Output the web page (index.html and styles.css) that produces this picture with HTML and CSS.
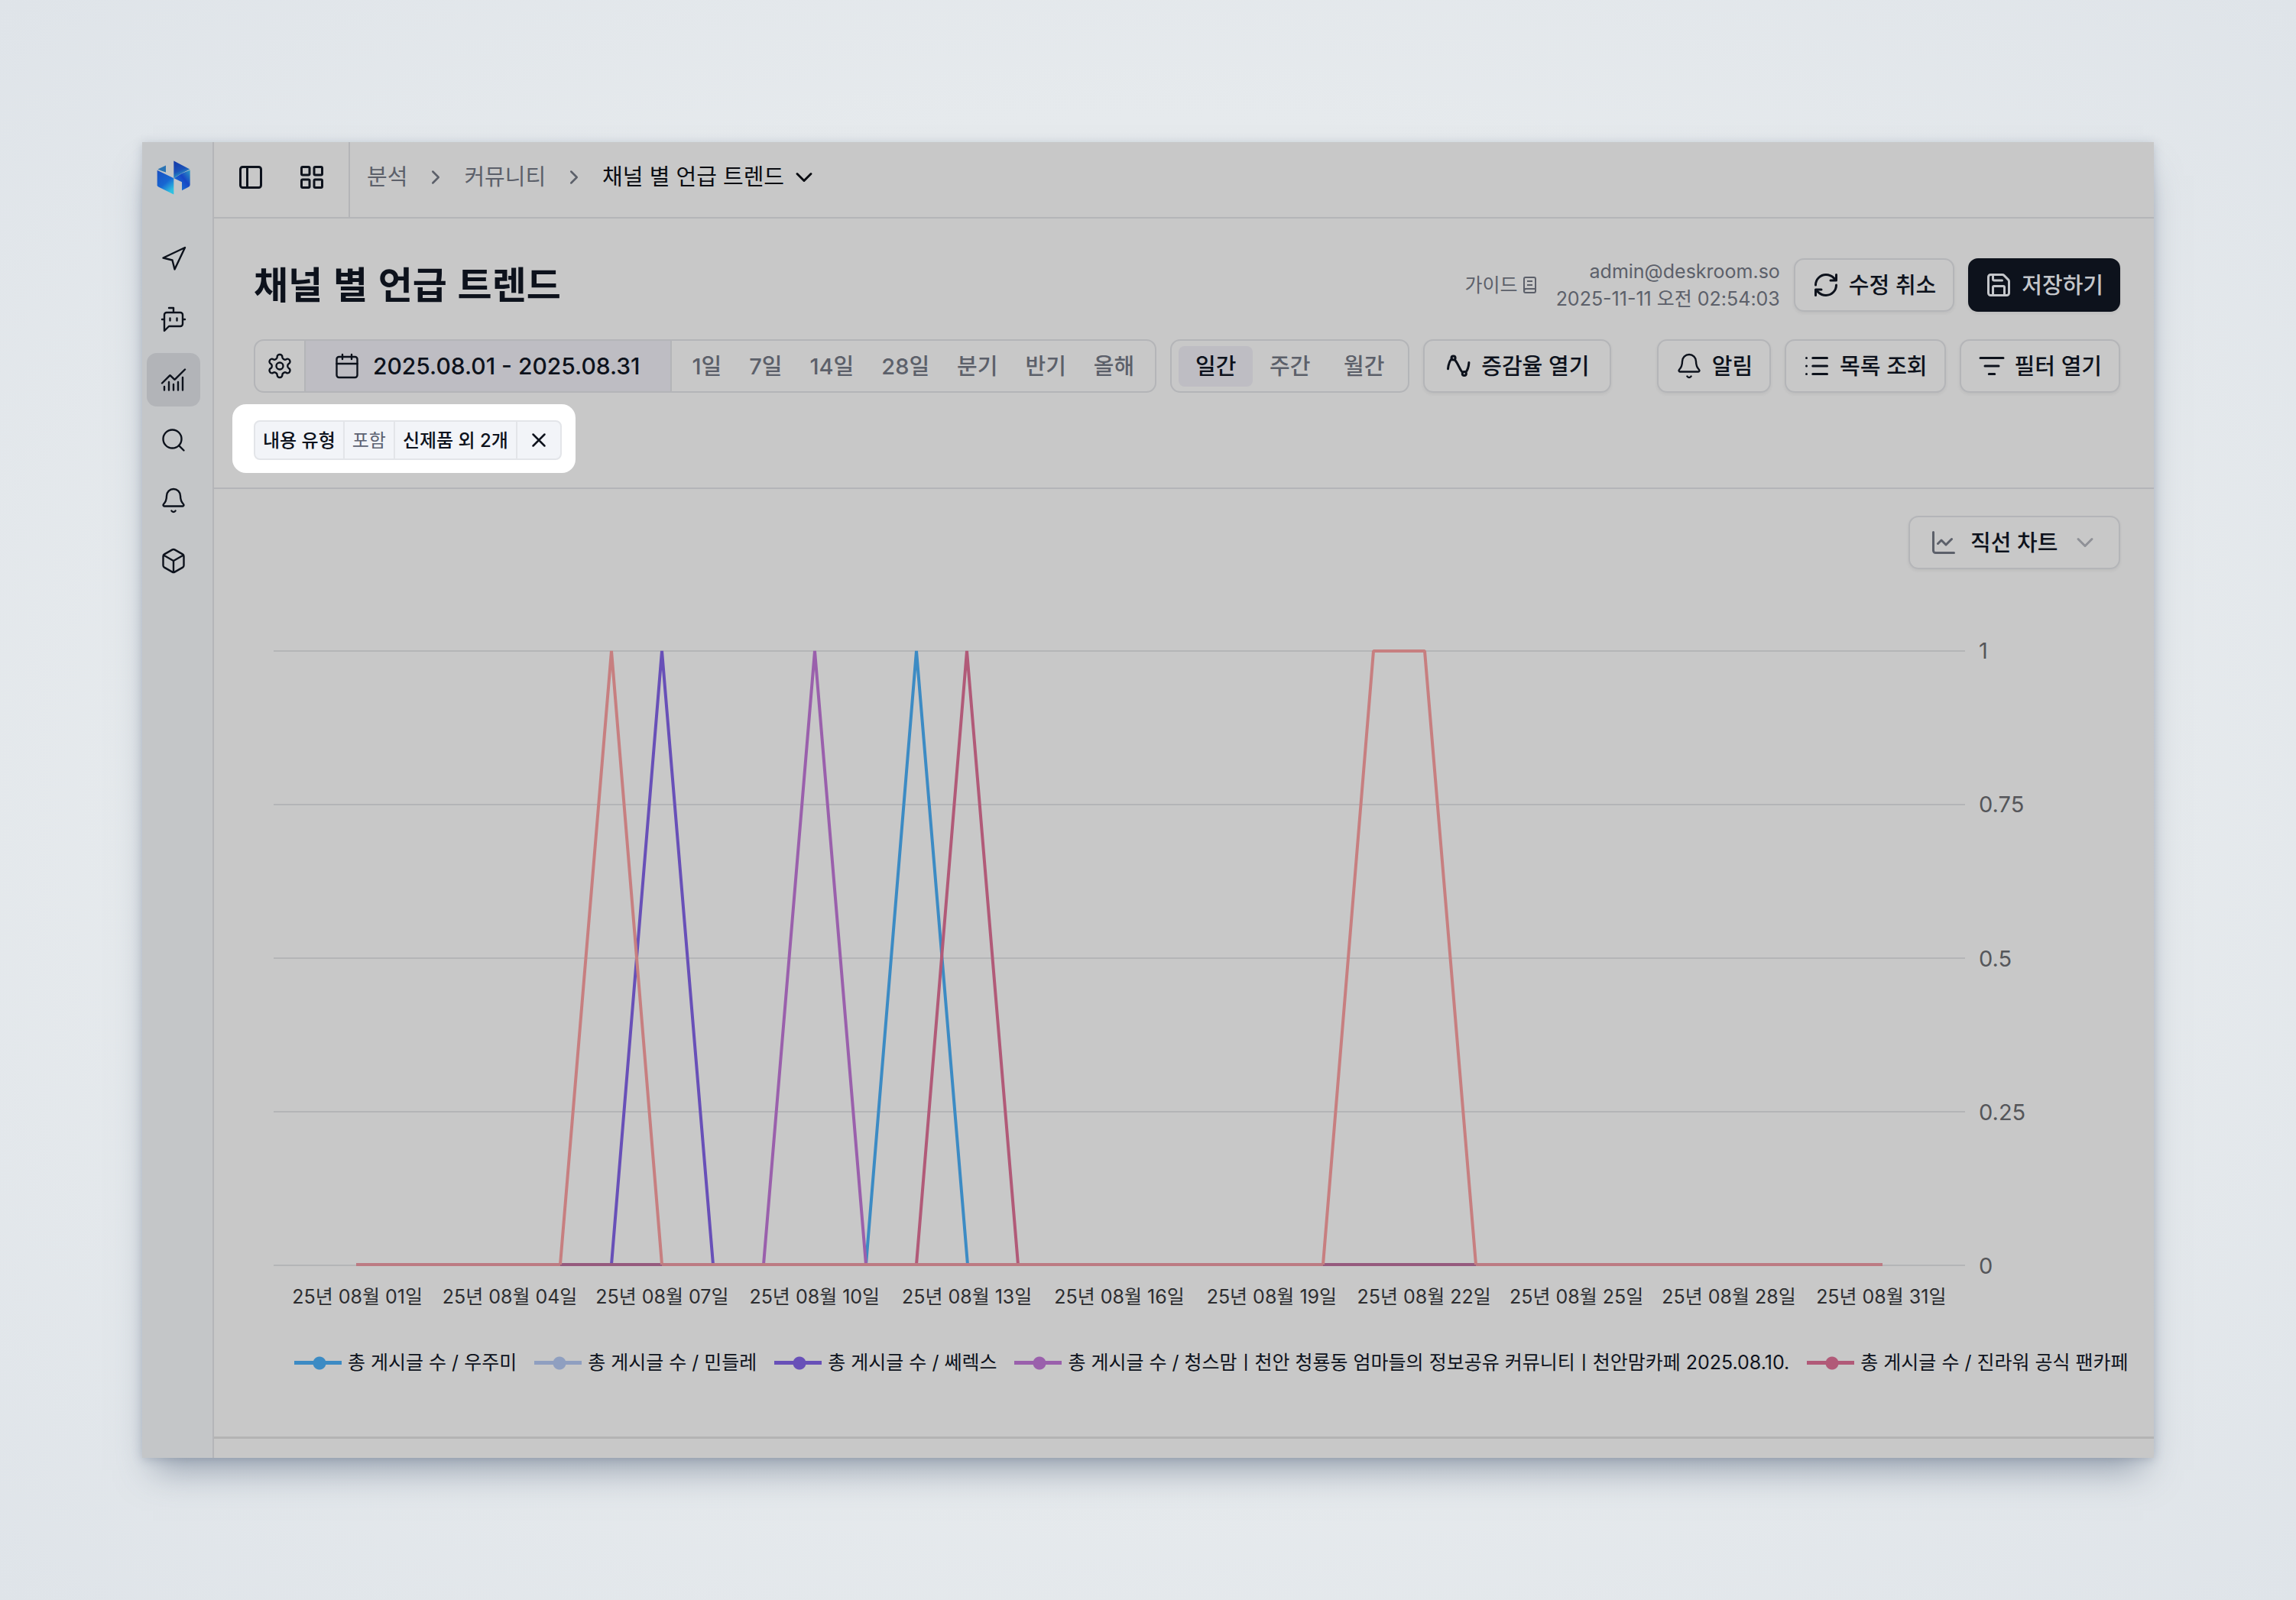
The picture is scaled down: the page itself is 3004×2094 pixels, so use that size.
FILE: index.html
```html
<!doctype html>
<html lang="ko">
<head>
    <meta charset="UTF-8">
    <meta name="viewport" content="width=device-width, initial-scale=1.0">
    <title>채널 별 언급 트렌드</title>
    <link rel="stylesheet" href="styles.css">
</head>
<body>
<div class="window">
    <aside class="sidebar">
        <a class="logo" href="#" aria-label="홈">
            <svg viewBox="0 0 132 134">
                <defs>
                    <linearGradient id="logoLeft" x1="0" y1="0" x2="0.6" y2="1">
                        <stop offset="0" stop-color="#1a4fc0"/>
                        <stop offset="0.6" stop-color="#1766d2"/>
                        <stop offset="1" stop-color="#2fc0e0"/>
                    </linearGradient>
                    <linearGradient id="logoTop" x1="0" y1="0" x2="0.4" y2="1">
                        <stop offset="0" stop-color="#1338a8"/>
                        <stop offset="0.6" stop-color="#1c52b8"/>
                        <stop offset="1" stop-color="#2aa6c8"/>
                    </linearGradient>
                    <linearGradient id="logoRight" x1="1" y1="0" x2="0" y2="1">
                        <stop offset="0" stop-color="#2f9fc4"/>
                        <stop offset="0.4" stop-color="#1646c4"/>
                        <stop offset="1" stop-color="#1f86dc"/>
                    </linearGradient>
                </defs>
                <path d="M4 34 36 19v27L20 41z" fill="#2b74b4"/>
                <path d="M2 38 67 69v64L8 104q-6-3-6-8z" fill="url(#logoLeft)"/>
                <path d="M67 1 130 34 100 49 67 69z" fill="url(#logoTop)"/>
                <path d="M100 50 131 37v58q0 6-6 9L99 117V84L68 69z" fill="url(#logoRight)"/>
            </svg>
        </a>
        <nav class="side_nav">
            <a class="side_item" href="#" aria-label="보내기">
                <svg class="icon thin" viewBox="0 0 24 24"><path d="m3 11 19-9-9 19-2-8z"/></svg>
            </a>
            <a class="side_item" href="#" aria-label="챗봇">
                <svg class="icon thin" viewBox="0 0 24 24"><path d="M12 6V2H8M8 18l-4 4V8a2 2 0 0 1 2-2h12a2 2 0 0 1 2 2v8a2 2 0 0 1-2 2ZM2 12h2M9 11v2M15 11v2M20 12h2"/></svg>
            </a>
            <a class="side_item side_item-active" href="#" aria-label="분석">
                <svg class="icon thin" viewBox="0 0 24 24"><path d="M12 16v5M16 14v7M20 10v11M22 3l-8.646 8.646a.5.5 0 0 1-.708 0L9.354 8.354a.5.5 0 0 0-.707 0L2 15M4 18v3M8 14v7"/></svg>
            </a>
            <a class="side_item" href="#" aria-label="검색">
                <svg class="icon thin" viewBox="0 0 24 24"><circle cx="11" cy="11" r="8"/><path d="m21 21-4.3-4.3"/></svg>
            </a>
            <a class="side_item" href="#" aria-label="알림">
                <svg class="icon thin" viewBox="0 0 24 24"><path d="M10.268 21a2 2 0 0 0 3.464 0M3.262 15.326A1 1 0 0 0 4 17h16a1 1 0 0 0 .74-1.673C19.41 13.956 18 12.499 18 8A6 6 0 0 0 6 8c0 4.499-1.411 5.956-2.738 7.326"/></svg>
            </a>
            <a class="side_item" href="#" aria-label="제품">
                <svg class="icon thin" viewBox="0 0 24 24"><path d="M21 8a2 2 0 0 0-1-1.73l-7-4a2 2 0 0 0-2 0l-7 4A2 2 0 0 0 3 8v8a2 2 0 0 0 1 1.73l7 4a2 2 0 0 0 2 0l7-4A2 2 0 0 0 21 16ZM3.3 7l8.7 5 8.7-5M12 22V12"/></svg>
            </a>
        </nav>
    </aside>

    <main class="main">
        <header class="header">
            <div class="header_tools">
                <button class="icon_btn" type="button" aria-label="사이드바">
                    <svg class="icon" viewBox="0 0 24 24"><rect x="3" y="3" width="18" height="18" rx="2"/><path d="M9 3v18"/></svg>
                </button>
                <button class="icon_btn" type="button" aria-label="대시보드">
                    <svg class="icon" viewBox="0 0 24 24"><rect x="3" y="3" width="7" height="7" rx="1"/><rect x="14" y="3" width="7" height="7" rx="1"/><rect x="14" y="14" width="7" height="7" rx="1"/><rect x="3" y="14" width="7" height="7" rx="1"/></svg>
                </button>
            </div>
            <nav class="breadcrumb">
                <a href="#">분석</a>
                <svg class="icon icon-sm" viewBox="0 0 24 24"><path d="m9 18 6-6-6-6"/></svg>
                <a href="#">커뮤니티</a>
                <svg class="icon icon-sm" viewBox="0 0 24 24"><path d="m9 18 6-6-6-6"/></svg>
                <button class="crumb_current" type="button">
                    채널 별 언급 트렌드
                    <svg class="icon" viewBox="0 0 24 24"><path d="m6 9 6 6 6-6"/></svg>
                </button>
            </nav>
        </header>

        <section class="toolbar">
            <div class="row">
                <h1 class="title">채널 별 언급 트렌드</h1>
                <div class="row_right">
                    <a class="guide" href="#">가이드
                        <svg viewBox="0 0 18 22"><rect x="2" y="1" width="15" height="20" rx="2"/><path d="M2 16h15M6 6h7M6 11h7M2 18q1-2 3-2"/></svg>
                    </a>
                    <p class="meta">admin@deskroom.so<br>2025-11-11 오전 02:54:03</p>
                    <button class="btn" type="button">
                        <svg class="icon" viewBox="0 0 24 24"><path d="M3 12a9 9 0 0 1 9-9 9.75 9.75 0 0 1 6.74 2.74L21 8M21 3v5h-5M21 12a9 9 0 0 1-9 9 9.75 9.75 0 0 1-6.74-2.74L3 16M8 16H3v5"/></svg>
                        수정 취소
                    </button>
                    <button class="btn btn-dark" type="button">
                        <svg class="icon" viewBox="0 0 24 24"><path d="M15.2 3a2 2 0 0 1 1.4.6l3.8 3.8a2 2 0 0 1 .6 1.4V19a2 2 0 0 1-2 2H5a2 2 0 0 1-2-2V5a2 2 0 0 1 2-2zM17 21v-7a1 1 0 0 0-1-1H8a1 1 0 0 0-1 1v7M7 3v4a1 1 0 0 0 1 1h7"/></svg>
                        저장하기
                    </button>
                </div>
            </div>

            <div class="row">
                <div class="period">
                    <button class="period_setting" type="button" aria-label="기간 설정">
                        <svg class="icon thin" viewBox="0 0 24 24"><path d="M12.22 2h-.44a2 2 0 0 0-2 2v.18a2 2 0 0 1-1 1.73l-.43.25a2 2 0 0 1-2 0l-.15-.08a2 2 0 0 0-2.73.73l-.22.38a2 2 0 0 0 .73 2.73l.15.1a2 2 0 0 1 1 1.72v.51a2 2 0 0 1-1 1.74l-.15.09a2 2 0 0 0-.73 2.73l.22.38a2 2 0 0 0 2.73.73l.15-.08a2 2 0 0 1 2 0l.43.25a2 2 0 0 1 1 1.73V20a2 2 0 0 0 2 2h.44a2 2 0 0 0 2-2v-.18a2 2 0 0 1 1-1.73l.43-.25a2 2 0 0 1 2 0l.15.08a2 2 0 0 0 2.73-.73l.22-.39a2 2 0 0 0-.73-2.73l-.15-.08a2 2 0 0 1-1-1.74v-.5a2 2 0 0 1 1-1.74l.15-.09a2 2 0 0 0 .73-2.73l-.22-.38a2 2 0 0 0-2.73-.73l-.15.08a2 2 0 0 1-2 0l-.43-.25a2 2 0 0 1-1-1.73V4a2 2 0 0 0-2-2z"/><circle cx="12" cy="12" r="3"/></svg>
                    </button>
                    <button class="period_date" type="button">
                        <svg class="icon thin" viewBox="0 0 24 24"><path d="M8 2v4M16 2v4M3 10h18"/><rect x="3" y="4" width="18" height="18" rx="2"/></svg>
                        2025.08.01 - 2025.08.31
                    </button>
                    <div class="period_presets">
                        <button type="button">1일</button>
                        <button type="button">7일</button>
                        <button type="button">14일</button>
                        <button type="button">28일</button>
                        <button type="button">분기</button>
                        <button type="button">반기</button>
                        <button type="button">올해</button>
                    </div>
                </div>
                <div class="unit">
                    <button class="unit_item unit_item-active" type="button">일간</button>
                    <button class="unit_item" type="button">주간</button>
                    <button class="unit_item" type="button">월간</button>
                </div>
                <button class="btn btn-rate" type="button">
                    <svg class="icon" viewBox="0 0 24 24"><path d="M3 14.5C3.5 10 4.5 7 6.4 5.8M9 6.6C12 10 13.5 16 15.8 17.6M18.5 17.2C20.5 15.5 21 12.5 21.3 9"/><circle cx="7.7" cy="5" r="1.7"/><circle cx="17.2" cy="18.7" r="1.7"/></svg>
                    증감율 열기
                </button>
                <div class="row_right">
                    <button class="btn" type="button">
                        <svg class="icon thin" viewBox="0 0 24 24"><path d="M10.268 21a2 2 0 0 0 3.464 0M3.262 15.326A1 1 0 0 0 4 17h16a1 1 0 0 0 .74-1.673C19.41 13.956 18 12.499 18 8A6 6 0 0 0 6 8c0 4.499-1.411 5.956-2.738 7.326"/></svg>
                        알림
                    </button>
                    <button class="btn" type="button">
                        <svg class="icon" viewBox="0 0 24 24"><path d="M3 5h.01M3 12h.01M3 19h.01M8.5 5H21M8.5 12H21M8.5 19H21"/></svg>
                        목록 조회
                    </button>
                    <button class="btn" type="button">
                        <svg class="icon" viewBox="0 0 24 24"><path d="M2 5h20M6 12h12M9.5 19h5"/></svg>
                        필터 열기
                    </button>
                </div>
            </div>

            <div class="filter_spot">
                <div class="chip">
                    <button class="chip_cell" type="button">내용 유형</button>
                    <button class="chip_cell chip_cell-muted" type="button">포함</button>
                    <button class="chip_cell" type="button">신제품 외 2개</button>
                    <button class="chip_close" type="button" aria-label="필터 삭제">
                        <svg class="icon icon-sm" viewBox="0 0 24 24"><path d="M18 6 6 18M6 6l12 12"/></svg>
                    </button>
                </div>
            </div>
        </section>

        <section class="content">
            <div class="chart_type">
                <svg class="icon" viewBox="0 0 24 24"><path d="M3 3v16a2 2 0 0 0 2 2h16M19 9l-5 5-4-4-3 3"/></svg>
                <select aria-label="차트 종류">
                    <option>직선 차트</option>
                    <option>막대 차트</option>
                </select>
                <svg class="icon chart_type_arrow" viewBox="0 0 24 24"><path d="m6 9 6 6 6-6"/></svg>
            </div>

            <div class="chart">
                <div class="plot">
                    <svg class="plot_svg" viewBox="0 0 2213 806">
                        <g stroke="#b4b5b7" stroke-width="2">
                            <path d="M0 1H2213M0 202H2213M0 403H2213M0 604H2213M0 805H2213"/>
                        </g>
                        <g fill="none" stroke-width="4" stroke-linejoin="bevel">
                            <polyline stroke="#3c8bc4" points="108,804 775,804 841,1 908,804 2105,804"/>
                            <polyline stroke="#6850b8" points="108,804 442,804 508,1 575,804 2105,804"/>
                            <polyline stroke="#9a60ac" points="108,804 641,804 708,1 775,804 2105,804"/>
                            <polyline stroke="#b15a78" points="108,804 841,804 907,1 974,804 2105,804"/>
                            <path stroke="#955a7e" d="M375 804H508M1373 804H1573"/>
                            <polyline stroke="#c77f80" points="375,804 442,1 508,804"/>
                            <polyline stroke="#c77f80" points="1373,804 1439,1 1506,1 1573,804"/>
                            <path stroke="#bc7b83" d="M108 804H375M508 804H1373M1573 804H2105"/>
                        </g>
                    </svg>
                    <div class="x_axis">
                        <span>25년 08월 01일</span>
                        <span>25년 08월 04일</span>
                        <span>25년 08월 07일</span>
                        <span>25년 08월 10일</span>
                        <span>25년 08월 13일</span>
                        <span>25년 08월 16일</span>
                        <span>25년 08월 19일</span>
                        <span>25년 08월 22일</span>
                        <span>25년 08월 25일</span>
                        <span>25년 08월 28일</span>
                        <span>25년 08월 31일</span>
                    </div>
                </div>
                <div class="y_axis">
                    <span>1</span>
                    <span>0.75</span>
                    <span>0.5</span>
                    <span>0.25</span>
                    <span>0</span>
                </div>
            </div>

            <ul class="legend">
                <li class="legend_item blue">총 게시글 수 / 우주미</li>
                <li class="legend_item gray">총 게시글 수 / 민들레</li>
                <li class="legend_item indigo">총 게시글 수 / 쎄렉스</li>
                <li class="legend_item violet">총 게시글 수 / 청스맘ㅣ천안 청룡동 엄마들의 정보공유 커뮤니티ㅣ천안맘카페 2025.08.10.</li>
                <li class="legend_item crimson">총 게시글 수 / 진라워 공식 팬카페</li>
            </ul>
        </section>
    </main>
</div>
</body>
</html>
```
FILE: styles.css
```css
* {
    box-sizing: border-box;
}

body {
    margin: 0;
    padding: 186px;
    min-height: 100vh;
    font-family: Inter, "Noto Sans CJK KR", sans-serif;
    font-size: 29px;
    line-height: 35px;
    color: #0d121c;
    background: radial-gradient(ellipse at 50% 50%, #e8ecef, #e6eaed 60%, #dfe4e9);
}

a {
    color: inherit;
    text-decoration: none;
}

button,
select {
    padding: 0;
    border: 0;
    font: inherit;
    color: inherit;
    background: none;
}

.icon {
    display: block;
    flex: none;
    width: 36px;
    height: 36px;
    fill: none;
    stroke: currentColor;
    stroke-width: 2;
    stroke-linecap: round;
    stroke-linejoin: round;
}

.icon.thin {
    stroke-width: 1.6;
}

.icon.icon-sm {
    width: 30px;
    height: 30px;
}

.window {
    display: flex;
    background: #c8c8c8;
    box-shadow: 0 30px 44px -14px rgba(80, 95, 120, 0.5), 0 2px 12px rgba(90, 105, 130, 0.28);
}

/* sidebar */
.sidebar {
    flex: none;
    width: 94px;
    border-right: 2px solid #b4b5b8;
    background: #c4c6c8;
}

.logo {
    display: block;
    width: 44px;
    margin: 24px 0 49px 19px;
}

.logo svg {
    display: block;
    width: 44px;
    height: 45px;
}

.side_nav {
    display: flex;
    flex-direction: column;
    gap: 9px;
    padding-left: 6px;
}

.side_item {
    display: flex;
    align-items: center;
    justify-content: center;
    width: 70px;
    height: 70px;
    border-radius: 13px;
}

.side_item-active {
    background: #b2b4b8;
}

/* header */
.main {
    flex: 1;
    min-width: 0;
}

.header {
    display: flex;
    height: 100px;
    border-bottom: 2px solid #b4b5b8;
}

.header_tools {
    display: flex;
    align-items: center;
    gap: 44px;
    padding: 0 30px 7px;
    border-right: 2px solid #b4b5b8;
}

.breadcrumb {
    display: flex;
    align-items: center;
    gap: 22px;
    padding: 0 22px 7px;
    color: #5c606a;
}

.crumb_current {
    display: flex;
    align-items: center;
    gap: 8px;
    color: #0b0d12;
}

/* toolbar */
.toolbar {
    display: flex;
    flex-direction: column;
    gap: 36px;
    padding: 52px 44px 19px 52px;
    border-bottom: 2px solid #b4b5b8;
}

.row {
    display: flex;
    align-items: center;
    height: 70px;
    gap: 18px;
}

.row_right {
    display: flex;
    align-items: center;
    gap: 18px;
    margin-left: auto;
}

.title {
    margin: 0;
    padding-bottom: 6px;
    font-family: "Noto Sans CJK KR", sans-serif;
    font-size: 49px;
    line-height: 64px;
    font-weight: 700;
}

.guide {
    display: flex;
    align-items: center;
    gap: 6px;
    margin-right: 8px;
    font-size: 25px;
    color: #5c606a;
}

.guide svg {
    width: 18px;
    height: 22px;
    fill: none;
    stroke: currentColor;
    stroke-width: 2;
}

.meta {
    margin: 0;
    font-size: 25px;
    line-height: 36px;
    text-align: right;
    color: #5c606a;
}

.btn {
    display: flex;
    align-items: center;
    gap: 12px;
    height: 70px;
    padding: 0 22px;
    border: 2px solid #b4b5b8;
    border-radius: 13px;
    font-weight: 500;
    box-shadow: 0 2px 4px rgba(0, 0, 0, 0.06);
}

.btn-rate {
    padding: 0 27px 0 26px;
}

.btn-dark {
    padding: 0 20px;
    border-color: #0d121c;
    color: #c4c6ca;
    background: #0d121c;
}

.period {
    display: flex;
    height: 70px;
    border: 2px solid #b4b5b8;
    border-radius: 13px;
    overflow: hidden;
}

.period_setting {
    display: flex;
    align-items: center;
    justify-content: center;
    width: 66px;
    border-right: 2px solid #b4b5b8;
}

.period_date {
    display: flex;
    align-items: center;
    gap: 16px;
    padding: 0 39px 0 36px;
    border-right: 2px solid #b4b5b8;
    font-size: 30px;
    font-weight: 500;
    background: #bebdc3;
}

.period_presets {
    display: flex;
    align-items: center;
    padding: 0 9px;
    font-weight: 500;
    color: #5c606a;
}

.period_presets button {
    padding: 0 18px;
}

.unit {
    display: flex;
    align-items: center;
    height: 70px;
    padding: 0 9px;
    border: 2px solid #b4b5b8;
    border-radius: 13px;
    color: #5c606a;
}

.unit_item {
    width: 97px;
    height: 53px;
    border-radius: 8px;
    font-weight: 500;
}

.unit_item-active {
    color: #0d121c;
    background: #bebdc3;
}

/* applied filters */
.filter_spot {
    align-self: flex-start;
    margin: -21px 0 0 -28px;
    padding: 21px 18px 17px 28px;
    border-radius: 18px;
    background: #fff;
}

.chip {
    display: flex;
    height: 52px;
    border: 2px solid #e3e5e9;
    border-radius: 8px;
    font-size: 24px;
    font-weight: 500;
    background: #f2f4f8;
}

.chip_cell {
    padding: 0 10px;
    border-right: 2px solid #e3e5e9;
}

.chip_cell-muted {
    font-weight: 400;
    color: #5c6272;
}

.chip_close {
    display: flex;
    align-items: center;
    justify-content: center;
    width: 56px;
}

/* chart */
.content {
    margin-bottom: 25px;
    padding: 35px 44px 79px 52px;
    border-bottom: 3px solid #b4b4b4;
}

.chart_type {
    display: flex;
    align-items: center;
    width: 277px;
    height: 70px;
    margin-left: auto;
    padding: 0 26px;
    border: 2px solid #b4b5b8;
    border-radius: 13px;
    color: #5c606a;
    box-shadow: 0 2px 4px rgba(0, 0, 0, 0.06);
}

.chart_type select {
    flex: 1;
    margin-left: 17px;
    appearance: none;
    font-weight: 500;
    color: #0d121c;
}

.chart_type_arrow {
    color: #8f9197;
}

.chart {
    display: flex;
    align-items: flex-start;
    gap: 18px;
    margin-top: 106px;
    padding-left: 26px;
}

.plot {
    flex: 1;
}

.plot_svg {
    display: block;
    width: 100%;
    height: auto;
    overflow: visible;
}

.x_axis {
    display: grid;
    grid-template-columns: repeat(11, 1fr);
    margin-top: 23px;
    padding: 0 10px;
    font-size: 25px;
    text-align: center;
    white-space: nowrap;
    color: #2c2d30;
}

.y_axis {
    display: flex;
    flex-direction: column;
    justify-content: space-between;
    width: 185px;
    height: 840px;
    margin-top: -17px;
    font-size: 29px;
    color: #55565a;
}

.legend {
    display: flex;
    gap: 23px;
    margin: 51px 0 0;
    padding: 0 0 0 53px;
    list-style: none;
    font-size: 25px;
    white-space: nowrap;
}

.legend_item {
    display: flex;
    flex: none;
    align-items: center;
    gap: 8px;
}

.legend_item::before {
    content: "";
    width: 62px;
    height: 18px;
    background:
        radial-gradient(circle at 33px 9px, currentColor 8px, transparent 9px),
        linear-gradient(currentColor, currentColor) 0 50% / 100% 5px no-repeat;
}

.blue::before { color: #3c8bc4; }
.gray::before { color: #8f9fc0; }
.indigo::before { color: #6850b8; }
.violet::before { color: #9a60ac; }
.crimson::before { color: #b15a78; }
```
